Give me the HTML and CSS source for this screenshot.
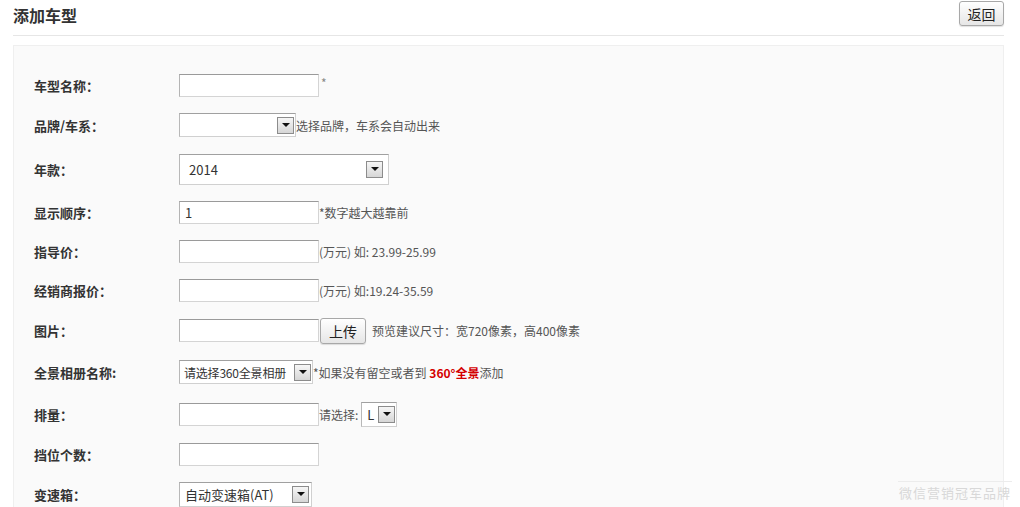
FILE: index.html
```html
<!DOCTYPE html>
<html lang="zh">
<head>
<meta charset="utf-8">
<title>添加车型</title>
<link rel="stylesheet" href="styles.css">
</head>
<body>
<div class="page">
  <div class="header">
    <h1 class="title">添加车型</h1>
    <button class="btn btn-back">返回</button>
  </div>
  <div class="panel">
    <div class="row">
      <span class="label">车型名称：</span>
      <span class="input"></span><span class="hint star">*</span>
    </div>
    <div class="row">
      <span class="label">品牌/车系：</span>
      <span class="sel sel-brand"><span class="sel-text"></span><span class="arrow"></span></span><span class="hint">选择品牌，车系会自动出来</span>
    </div>
    <div class="row row-tall">
      <span class="label">年款：</span>
      <span class="sel sel-year"><span class="sel-text">2014</span><span class="arrow"></span></span>
    </div>
    <div class="row row-s">
      <span class="label">显示顺序：</span>
      <span class="input">1</span><span class="hint">*数字越大越靠前</span>
    </div>
    <div class="row row-s">
      <span class="label">指导价：</span>
      <span class="input"></span><span class="hint">(万元) 如: 23.99-25.99</span>
    </div>
    <div class="row row-s">
      <span class="label">经销商报价：</span>
      <span class="input"></span><span class="hint">(万元) 如:19.24-35.59</span>
    </div>
    <div class="row">
      <span class="label">图片：</span>
      <span class="input"></span><button class="btn btn-upload">上传</button><span class="hint hint-gap">预览建议尺寸：宽720像素，高400像素</span>
    </div>
    <div class="row row-m">
      <span class="label">全景相册名称:</span>
      <span class="sel sel-pano"><span class="sel-text">请选择360全景相册</span><span class="arrow"></span></span><span class="hint">*如果没有留空或者到 <b class="red">360°全景</b>添加</span>
    </div>
    <div class="row">
      <span class="label">排量：</span>
      <span class="input"></span><span class="hint">请选择:</span><span class="sel sel-unit"><span class="sel-text">L</span><span class="arrow"></span></span>
    </div>
    <div class="row">
      <span class="label">挡位个数：</span>
      <span class="input"></span>
    </div>
    <div class="row">
      <span class="label">变速箱：</span>
      <span class="sel sel-gear"><span class="sel-text">自动变速箱(AT)</span><span class="arrow"></span></span>
    </div>
  </div>
  <div class="watermark">微信营销冠军品牌</div>
</div>
</body>
</html>
```
FILE: styles.css
```css
html, body {
  margin: 0;
  padding: 0;
  height: 507px;
  overflow: hidden;
  background: #fff;
}
body {
  font-family: "Noto Sans CJK SC", "Noto Sans", "Liberation Sans", sans-serif;
  color: #333;
  font-size: 13px;
}
.page {
  position: relative;
  height: 507px;
  overflow: hidden;
}
.header {
  display: flex;
  justify-content: space-between;
  align-items: flex-start;
  height: 35px;
  margin: 0 16px 0 13px;
  border-bottom: 1px solid #e6e6e6;
}
.title {
  margin: 0;
  padding-top: 4px;
  font-size: 16px;
  line-height: 22px;
  font-weight: bold;
  color: #333;
}
.btn {
  font-family: inherit;
  font-size: 14px;
  color: #222;
  border: 1px solid #a8a8a8;
  border-radius: 3px;
  background: linear-gradient(#ffffff, #e6e6e6);
  box-shadow: 0 1px 1px rgba(0,0,0,0.12);
  padding: 0;
  cursor: pointer;
}
.btn-back {
  margin-top: 1px;
  width: 45px;
  height: 25px;
}
.panel {
  box-sizing: border-box;
  margin: 9px 16px 0 13px;
  border: 1px solid #efefef;
  border-bottom: none;
  background: #fafafa;
  padding: 19px 20px 0;
  height: 462px;
  overflow: hidden;
}
.row {
  display: flex;
  align-items: center;
  height: 40px;
}
.row-tall { height: 48px; }
.row-s { height: 39px; }
.row-m { height: 44px; }
.label {
  width: 145px;
  flex: none;
  font-weight: bold;
  font-size: 13px;
  color: #333;
}
.input {
  box-sizing: border-box;
  width: 140px;
  height: 23px;
  background: #fff;
  border: 1px solid #d4d4d4;
  border-top-color: #9a9a9a;
  border-left-color: #b4b4b4;
  padding: 0 5px;
  font-size: 13px;
  line-height: 21px;
  color: #333;
}
.hint {
  font-size: 12px;
  color: #555;
  white-space: nowrap;
}
.star {
  align-self: flex-start;
  margin-top: 9px;
  margin-left: 2px;
  color: #888;
}
.hint-gap { margin-left: 6px; }
.red { color: #d40000; font-weight: bold; }
.sel {
  box-sizing: border-box;
  display: flex;
  align-items: center;
  justify-content: space-between;
  background: #fff;
  border: 1px solid #d0d0d0;
  border-top-color: #a0a0a0;
  border-left-color: #b8b8b8;
  padding: 0 1px 0 5px;
  font-size: 13px;
  color: #333;
  white-space: nowrap;
}
.arrow {
  box-sizing: border-box;
  flex: none;
  width: 17px;
  height: 17px;
  border: 1px solid #8c8c8c;
  background: linear-gradient(#f6f6f6, #d6d6d6);
  display: flex;
  align-items: center;
  justify-content: center;
}
.arrow::after {
  content: "";
  width: 0;
  height: 0;
  border-left: 4px solid transparent;
  border-right: 4px solid transparent;
  border-top: 4px solid #111;
}
.sel-brand { width: 117px; height: 24px; }
.sel-year { width: 210px; height: 31px; padding: 0 5px 0 9px; }
.sel-pano { width: 134px; height: 24px; padding-left: 4px; }
.sel-pano .sel-text { font-size: 12px; letter-spacing: -0.2px; }
.sel-unit { width: 36px; height: 25px; margin-left: 3px; }
.sel-gear { width: 133px; height: 25px; padding-right: 2px; }
.btn-upload {
  width: 46px;
  height: 26px;
  margin-left: 1px;
  margin-top: 2px;
}
.watermark {
  position: absolute;
  left: 898px;
  top: 481px;
  width: 114px;
  padding-top: 3px;
  border-top: 1px solid #ececec;
  text-align: center;
  font-size: 13px;
  line-height: 16px;
  color: #d8d8d8;
  letter-spacing: 1px;
}
```
